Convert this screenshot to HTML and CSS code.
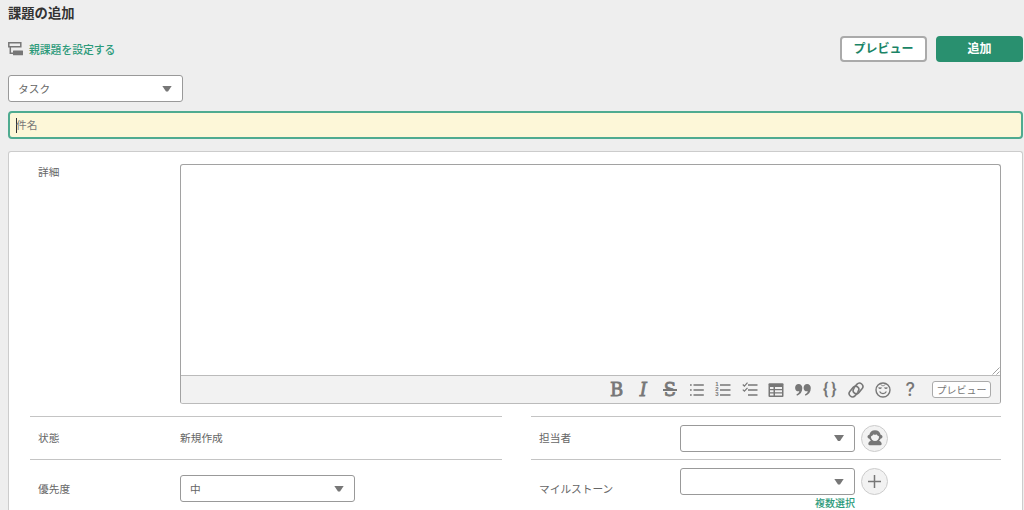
FILE: index.html
```html
<!DOCTYPE html>
<html lang="ja">
<head>
    <meta charset="UTF-8">
    <meta name="viewport" content="width=device-width, initial-scale=1.0">
    <title>課題の追加</title>
    <link rel="stylesheet" href="styles.css">
</head>
<body>
    <h1>課題の追加</h1>

    <div class="header-row">
        <a class="parent-link" href="#">
            <svg width="15" height="14" viewBox="0 0 15 14">
                <path d="M.8.8h12v4H.8zM2.3 4.8v6.4H6" fill="none" stroke="#777" stroke-width="1.5"/>
                <rect x="5" y="8.6" width="10" height="4.7" rx=".5" fill="#777"/>
            </svg>
            親課題を設定する
        </a>
        <div class="header-buttons">
            <button class="btn">プレビュー</button>
            <button class="btn btn-primary">追加</button>
        </div>
    </div>

    <div class="select type-select">タスク</div>

    <div class="subject"><span class="caret"></span>件名</div>

    <div class="panel">
        <div class="detail-row">
            <div class="label">詳細</div>
            <div class="editor">
                <div class="editor-text">
                    <svg class="resize" width="8" height="8" viewBox="0 0 8 8"><path d="M.5 7.5l7-7M4.5 7.5l3-3" stroke="#888" stroke-width=".8"/></svg>
                </div>
                <div class="toolbar">
                    <span class="tool slab">B</span>
                    <span class="tool slab italic">I</span>
                    <span class="tool slab strike">S</span>
                    <span class="tool">
                        <svg width="16" height="16" viewBox="0 0 16 16" stroke="#777" stroke-width="1.5"><path d="M4.5 3h10.3M4.5 8h10.3M4.5 13h10.3M1 3h1.7M1 8h1.7M1 13h1.7"/></svg>
                    </span>
                    <span class="tool numbered">
                        <span class="digits"><i>1</i><i>2</i><i>3</i></span>
                        <svg width="11" height="16" viewBox="0 0 11 16" stroke="#777" stroke-width="1.5"><path d="M0 3h10.5M0 8h10.5M0 13h10.5"/></svg>
                    </span>
                    <span class="tool">
                        <svg width="16" height="16" viewBox="0 0 16 16" fill="none" stroke="#777" stroke-width="1.5"><path d="M6 3h9.5M6 8h9.5M6 13h9.5"/><path d="M.8 2.5l1.6 1.6L5.5.7M.8 7.6l1.6 1.6L5.5 5.8" stroke-width="1.2"/></svg>
                    </span>
                    <span class="tool">
                        <svg width="16" height="16" viewBox="0 0 16 16"><rect x=".5" y="1.3" width="15" height="13.7" rx="1" fill="#777"/><path d="M2 5h3.5v1.9H2zM7 5h7v1.9H7zM2 8.300h3.500v1.900H2zM7 8.300h7v1.900H7zM2 11.600h3.500v1.900H2zM7 11.600h7v1.900H7z" fill="#f2f2f2"/></svg>
                    </span>
                    <span class="tool">
                        <svg width="16" height="16" viewBox="0 0 16 16" fill="#777"><path id="quote" d="M3.600 2C5.900 2 7.300 3.800 7.300 6.100c0 4-2 6.600-5.300 7.600l-.6-1.200c1.700-.7 2.700-1.800 2.900-3.200C1.700 9.700.1 8.100.1 5.700.1 3.500 1.600 2 3.600 2z"/><use href="#quote" x="8.5"/></svg>
                    </span>
                    <span class="tool braces">{}</span>
                    <span class="tool">
                        <svg width="16" height="16" viewBox="0 0 16 16" fill="none" stroke="#777" stroke-width="1.6" stroke-linecap="round"><path d="M9.600 10.800l-2.400 2.800c-1.400 1.500-3.500 1.600-4.900.4s-1.500-3.300-.3-4.800l3.200-3.800c1.300-1.400 3.300-1.500 4.600-.3 1.300 1.200 1.400 3 .2 4.400"/><path d="M6.400 5.200l2.400-2.800c1.400-1.500 3.500-1.600 4.900-.4s1.500 3.300.3 4.800l-3.200 3.800c-1.300 1.400-3.300 1.500-4.600.3-1.300-1.200-1.400-3-.2-4.400"/></svg>
                    </span>
                    <span class="tool">
                        <svg width="16" height="16" viewBox="0 0 16 16" fill="none" stroke="#777" stroke-width="1.4"><circle cx="8" cy="8" r="7"/><path d="M4.600 9.500c1.300 2.800 5.500 2.800 6.800 0M3.700 5.400c.7 1.300 2 1.300 2.700 0M9.600 5.400c.7 1.300 2 1.300 2.700 0" stroke-width="1.200"/><path d="M5.500 2.500L8 4l2.500-1.500" stroke-width=".8"/></svg>
                    </span>
                    <span class="tool question">?</span>
                    <button class="btn-mini">プレビュー</button>
                </div>
            </div>
        </div>

        <div class="columns">
            <div class="column">
                <div class="row">
                    <div class="label">状態</div>
                    <div class="value">新規作成</div>
                </div>
                <div class="row row-tall">
                    <div class="label">優先度</div>
                    <div class="select">中</div>
                </div>
            </div>
            <div class="column">
                <div class="row">
                    <div class="label">担当者</div>
                    <div class="select"></div>
                    <button class="round">
                        <svg width="16" height="16" viewBox="0 0 16 16"><path d="M8 .3c3.200 0 5.200 1.800 5.600 4.500 1.200.2 1.900 1 1.900 2s-.8 1.900-2 2c-.3.900-.8 1.500-1.500 2 1.700.6 2.700 1.800 2.700 3.300 0 .9-1 1.200-2 1.200H3.300c-1 0-2-.3-2-1.200 0-1.500 1-2.700 2.700-3.300-.7-.5-1.200-1.100-1.500-2C1.300 8.700.5 7.800.5 6.800s.7-1.800 1.900-2C2.800 2.100 4.800.3 8 .3z" fill="#777"/><path d="M3.900 6.500C5 6 6 5.200 6.500 4.200c1 .7 2 .7 3 0 .5 1 1.500 1.800 2.600 2.300 0 2.600-1.700 4.500-4.100 4.500S3.900 9.100 3.900 6.500z" fill="#f2f2f2"/></svg>
                    </button>
                </div>
                <div class="row row-tall">
                    <div class="label">マイルストーン</div>
                    <div class="milestone">
                        <div class="milestone-field">
                            <div class="select"></div>
                            <button class="round">
                                <svg width="15" height="15" viewBox="0 0 15 15"><path d="M7.500 1v13M1 7.500h13" stroke="#777" stroke-width="1.5"/></svg>
                            </button>
                        </div>
                        <a class="multi-link" href="#">複数選択</a>
                    </div>
                </div>
            </div>
        </div>
    </div>
</body>
</html>
```
FILE: styles.css
```css
* {
    box-sizing: border-box;
}

body {
    display: flex;
    flex-direction: column;
    margin: 0;
    padding: 4px 1px 0 8px;
    height: 510px;
    background: #eee;
    color: #666;
    font-family: "Noto Sans CJK JP", sans-serif;
    font-size: 10.7px;
    line-height: 16px;
}

h1 {
    margin: 0;
    font-size: 13.3px;
    line-height: 18px;
    color: #333;
}

a {
    color: #2c9a7a;
    text-decoration: none;
}

button {
    font-family: inherit;
    padding: 0;
}

/* Header */
.header-row {
    display: flex;
    justify-content: space-between;
    align-items: center;
    margin-top: 14px;
    height: 26px;
}

.parent-link {
    display: flex;
    align-items: center;
    gap: 6px;
    font-size: 10.8px;
    font-weight: 500;
    line-height: 15px;
}

.header-buttons {
    display: flex;
    gap: 9px;
}

.btn {
    width: 87px;
    height: 26px;
    padding-bottom: 2px;
    border: 2px solid #aaa;
    border-radius: 4px;
    background: #fff;
    color: #1a8466;
    font-size: 12px;
    font-weight: bold;
    line-height: 20px;
}

.btn-primary {
    border-color: #29906f;
    background: #29906f;
    color: #fff;
}

/* Form fields */
.select {
    display: flex;
    align-items: center;
    justify-content: space-between;
    width: 175px;
    height: 27px;
    padding: 0 10px 0 9px;
    border: 1px solid #999;
    border-radius: 3px;
    background: #fff;
}

.select::after {
    content: "";
    margin-left: auto;
    width: 10px;
    height: 6px;
    background: #777;
    clip-path: polygon(0 0, 100% 0, 60% 100%, 40% 100%);
}

.type-select {
    flex: none;
    margin-top: 13px;
    line-height: 14px;
}

.subject {
    display: flex;
    flex: none;
    align-items: center;
    height: 28px;
    margin-top: 9px;
    padding-left: 6px;
    border: 2px solid #4fab90;
    border-radius: 4px;
    background: #fdf7d8;
    color: #777;
}

.caret {
    width: 1px;
    height: 15px;
    margin-right: -1px;
    background: #333;
}

/* Detail panel */
.panel {
    flex: 1;
    margin-top: 12px;
    padding: 12px 21px 0;
    border: 1px solid #ccc;
    border-bottom: none;
    border-radius: 3px 3px 0 0;
    background: #fff;
    min-height: 0;
}

.detail-row {
    display: flex;
}

.label {
    width: 141px;
    flex: none;
}

.detail-row .label {
    width: 150px;
    padding-left: 8px;
    line-height: 16px;
}

.editor {
    flex: 1;
    height: 240px;
    border: 1px solid #a2a2a2;
    border-bottom-color: #bbb;
    border-radius: 3px;
}

.editor-text {
    display: flex;
    align-items: flex-end;
    justify-content: flex-end;
    height: 210px;
}

.toolbar {
    display: flex;
    align-items: center;
    justify-content: flex-end;
    height: 28px;
    padding-right: 9px;
    border-top: 1px solid #bbb;
    border-radius: 0 0 2px 2px;
    background: #f2f2f2;
}

.tool {
    display: flex;
    align-items: center;
    justify-content: center;
    width: 26.65px;
    height: 16px;
    color: #777;
}

.slab {
    font-family: "DejaVu Serif", serif;
    font-size: 18px;
    -webkit-text-stroke: 0.8px #777;
}

.italic {
    font-style: italic;
}

.strike {
    position: relative;
}

/* Bar through the S, with a light edge so it stands off the letter */
.strike::after {
    content: "";
    position: absolute;
    left: 6px;
    right: 6px;
    top: 7px;
    height: 2px;
    background: #777;
    border-bottom: 1px solid #f2f2f2;
    box-sizing: content-box;
}

.digits {
    display: flex;
    flex-direction: column;
    width: 5px;
    font: bold 6px/5.3px "Liberation Sans", sans-serif;
}

.digits i {
    font-style: normal;
}

.braces {
    padding-left: 3px;
    font-family: Roboto, sans-serif;
    font-size: 16px;
    font-weight: bold;
    letter-spacing: 3px;
}

.question {
    padding-left: 1px;
    font-family: Inter, sans-serif;
    font-size: 18px;
    font-weight: 500;
}

.btn-mini {
    width: 59px;
    height: 17px;
    margin-left: 9px;
    border: 1px solid #aaa;
    border-radius: 3px;
    background: #fff;
    color: #777;
    font-size: 10px;
    line-height: 14px;
}

/* Attributes */
.columns {
    display: flex;
    gap: 29px;
    height: 94px;
    margin-top: 12px;
}

.column {
    width: 472px;
}

.column + .column {
    width: 470px;
}

.row {
    display: flex;
    align-items: center;
    height: 43px;
    padding-left: 8px;
    border-top: 1px solid #c4c4c4;
}

.row .label {
    width: 142px;
}

.column + .column .row .label {
    width: 141px;
}

.row-tall {
    height: 51px;
    padding-top: 7px;
}

.round {
    display: flex;
    align-items: center;
    justify-content: center;
    width: 27px;
    height: 27px;
    margin-left: 6px;
    border: 1px solid #ccc;
    border-radius: 50%;
    background: #f2f2f2;
}

.milestone {
    display: flex;
    flex-direction: column;
    align-self: flex-start;
    padding-top: 1px;
}

.milestone-field {
    display: flex;
}

.multi-link {
    width: 175px;
    text-align: right;
    font-size: 10px;
    font-weight: 500;
    line-height: 15px;
}
```
